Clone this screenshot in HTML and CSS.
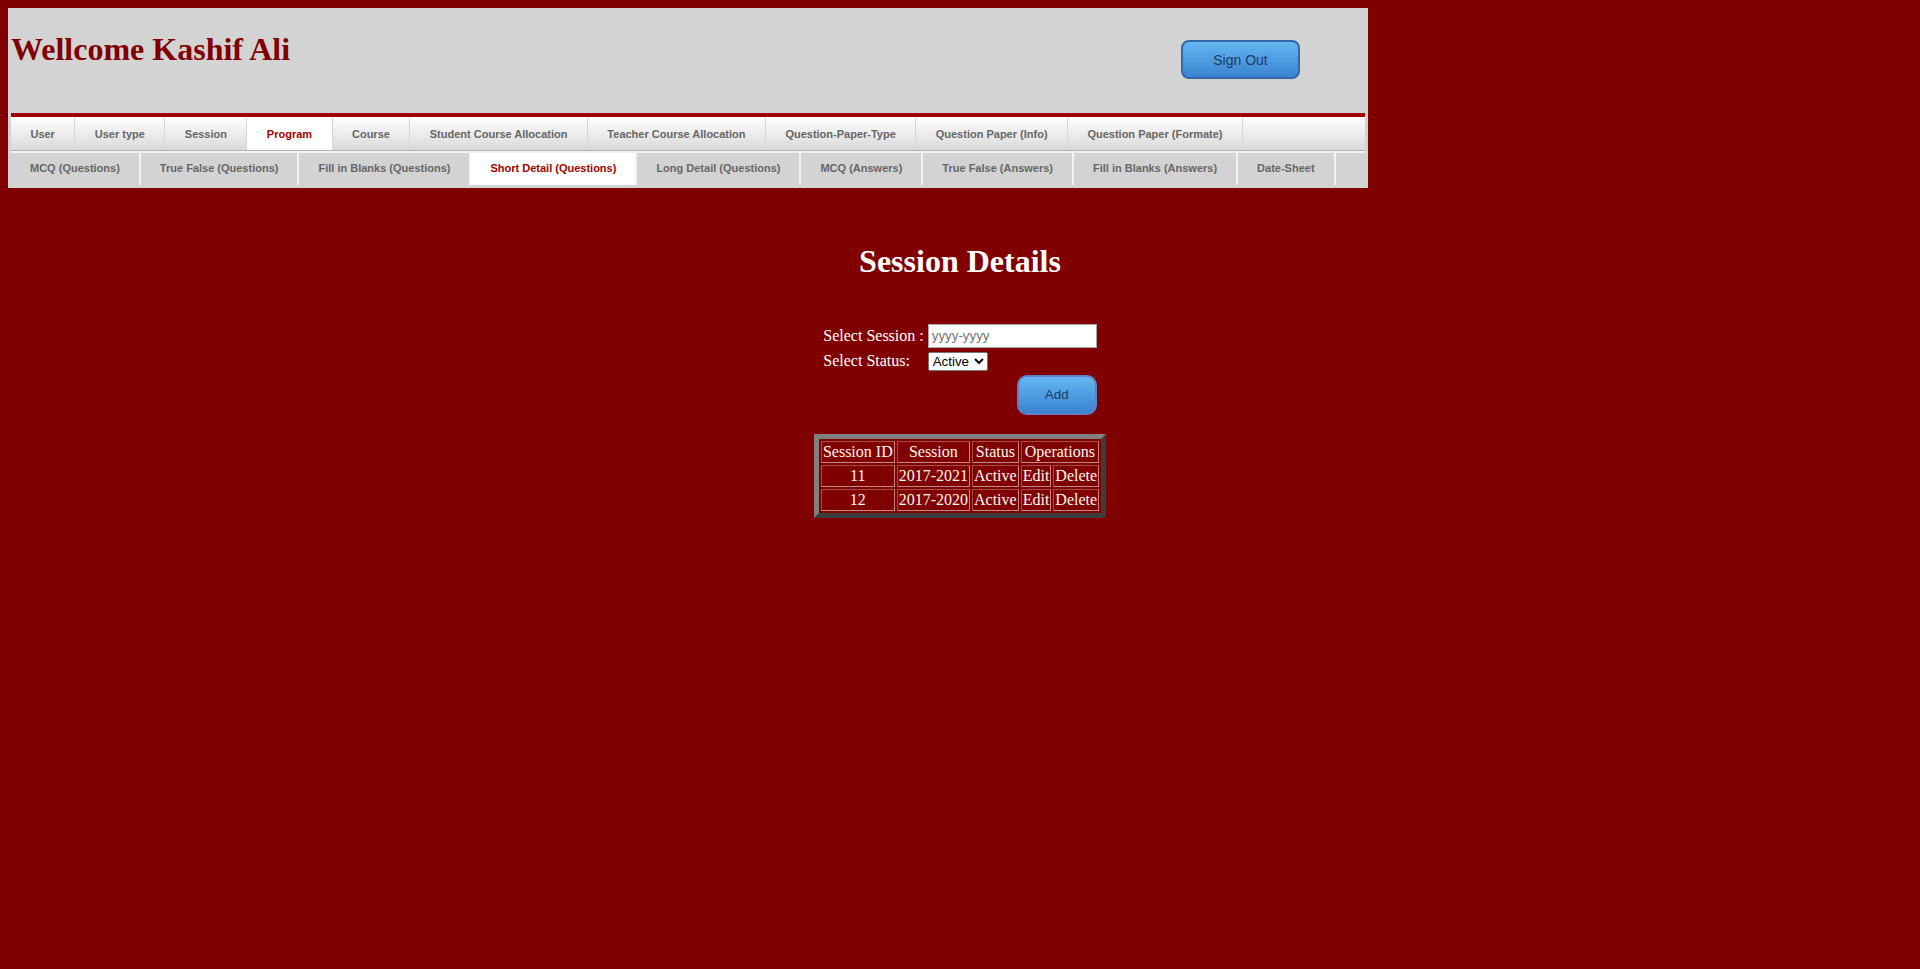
FILE: index.html
```html
<!DOCTYPE html>
<html>
<head>
<meta charset="utf-8">
<title>Session Details</title>
<link rel="stylesheet" href="styles.css">
</head>
<body>
<div class="header">
  <div class="header-top">
    <h1 class="welcome">Wellcome Kashif Ali</h1>
    <button type="button" class="btn btn-signout">Sign Out</button>
  </div>
  <ul class="menu menu-main">
    <li>User</li>
    <li>User type</li>
    <li>Session</li>
    <li class="active">Program</li>
    <li>Course</li>
    <li>Student Course Allocation</li>
    <li>Teacher Course Allocation</li>
    <li>Question-Paper-Type</li>
    <li>Question Paper (Info)</li>
    <li>Question Paper (Formate)</li>
  </ul>
  <ul class="menu menu-sub">
    <li>MCQ (Questions)</li>
    <li>True False (Questions)</li>
    <li>Fill in Blanks (Questions)</li>
    <li class="active">Short Detail (Questions)</li>
    <li>Long Detail (Questions)</li>
    <li>MCQ (Answers)</li>
    <li>True False (Answers)</li>
    <li>Fill in Blanks (Answers)</li>
    <li>Date-Sheet</li>
  </ul>
</div>
<div class="main">
  <h1 class="page-title">Session Details</h1>
  <form class="session-form">
    <table class="form-table">
      <tr>
        <td class="label-cell">Select Session :</td>
        <td><input type="text" class="session-input" placeholder="yyyy-yyyy"></td>
      </tr>
      <tr>
        <td class="label-cell">Select Status:</td>
        <td><select class="status-select"><option>Active</option><option>Inactive</option></select></td>
      </tr>
      <tr>
        <td></td>
        <td class="btn-cell"><button type="button" class="btn btn-add">Add</button></td>
      </tr>
    </table>
  </form>
  <table class="data-table">
    <tr>
      <td>Session ID</td>
      <td>Session</td>
      <td>Status</td>
      <td colspan="2">Operations</td>
    </tr>
    <tr>
      <td>11</td>
      <td>2017-2021</td>
      <td>Active</td>
      <td>Edit</td>
      <td>Delete</td>
    </tr>
    <tr>
      <td>12</td>
      <td>2017-2020</td>
      <td>Active</td>
      <td>Edit</td>
      <td>Delete</td>
    </tr>
  </table>
</div>
</body>
</html>
```

FILE: styles.css
```css
body {
  margin: 8px;
  background: #800000;
  font-family: "Liberation Serif", "Times New Roman", serif;
  color: #ffffff;
}

.header {
  width: 1354px;
  padding: 0 3px 3px;
  background: #d3d3d3;
}

.header-top {
  height: 105px;
  display: flex;
  justify-content: space-between;
  align-items: flex-start;
}

.welcome {
  margin: 22.5px 0 0;
  font-size: 32px;
  font-weight: bold;
  color: #800000;
}

.btn {
  box-sizing: border-box;
  padding: 0;
  font-family: "Liberation Sans", Arial, sans-serif;
  color: #1d3b66;
  background: linear-gradient(#64b7f2, #3a83d1);
  border: 2px solid #3466a8;
  border-radius: 8px;
}

.btn-signout {
  width: 119px;
  height: 39px;
  margin: 32px 65px 0 0;
  font-size: 14px;
}

.menu {
  display: flex;
  margin: 0;
  padding: 0;
  list-style: none;
  font-family: "Liberation Sans", Arial, sans-serif;
  font-size: 11px;
  font-weight: bold;
  color: #666666;
}

.menu-main {
  border-top: 4px solid #9e0000;
  border-bottom: 1px solid #b2b2b2;
  background: linear-gradient(#ffffff, #d9d9d9);
}

.menu-main li {
  height: 33px;
  line-height: 34px;
  padding: 0 19.45px;
  border-right: 1px solid #d6d6d6;
  white-space: nowrap;
}

.menu-sub {
  border-top: 2px solid #f3f3f3;
}

.menu-sub li {
  height: 32px;
  line-height: 31px;
  padding: 0 19px;
  border-right: 2px solid #f3f3f3;
  white-space: nowrap;
}

.menu .active {
  background: #ffffff;
  color: #a30000;
}

.main {
  padding-top: 34px;
}

.page-title {
  margin: 21.44px 0 0;
  font-size: 32px;
  font-weight: bold;
  text-align: center;
  color: #ffffff;
}

.session-form {
  margin: 40.5px 0 16px;
}

.form-table {
  margin: 0 auto;
  border-spacing: 2px;
}

.form-table td {
  padding: 1px;
  font-size: 16px;
}

.session-input {
  display: block;
  box-sizing: border-box;
  width: 169px;
  height: 24px;
  padding: 1px 3px;
  border: 1px solid #a9a9a9;
  font-family: "Liberation Sans", Arial, sans-serif;
  font-size: 13.33px;
}

.status-select {
  box-sizing: border-box;
  width: 60px;
  height: 19px;
  font-family: "Liberation Sans", Arial, sans-serif;
  font-size: 13.33px;
}

.btn-cell {
  text-align: right;
}

.btn-add {
  width: 80px;
  height: 40px;
  font-size: 13.33px;
  border-radius: 10px;
  border-color: #5f80c8;
}

.data-table {
  margin: 0 auto;
  border-collapse: separate;
  border-spacing: 2px;
  border: 5px solid;
  border-color: #808080 #3c3c3c #3c3c3c #808080;
  font-size: 16px;
}

.data-table td {
  padding: 1px;
  border: 1px solid;
  border-color: #a24c4c #c48686 #c48686 #a24c4c;
  text-align: center;
  color: #fff8f0;
}
```
